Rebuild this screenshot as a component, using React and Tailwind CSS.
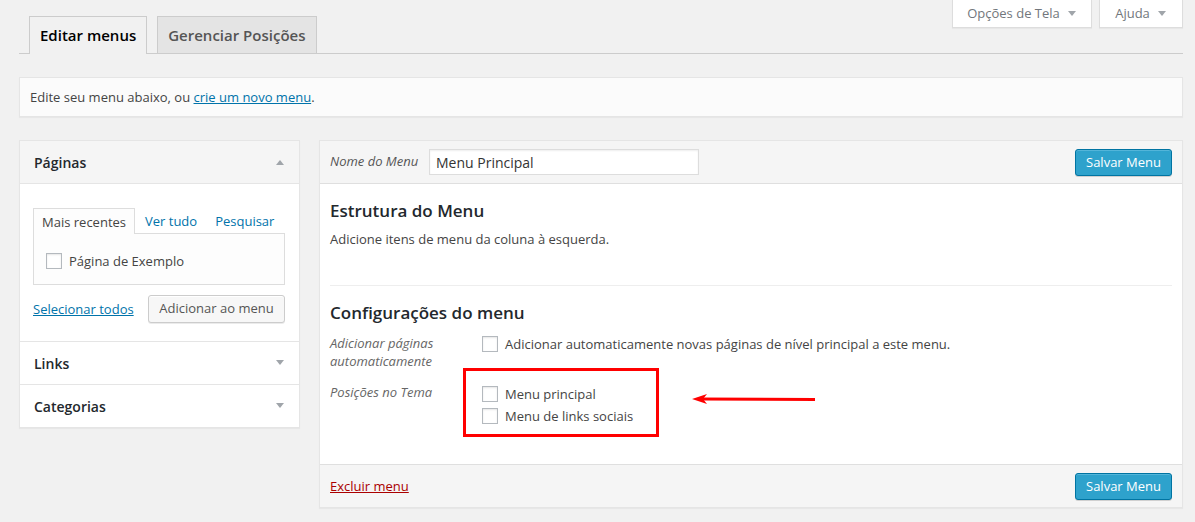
// Tela de edição de menus (painel admin)
import React from "react";

const font = { fontFamily: '"Open Sans", "Liberation Sans", sans-serif' };

function Checkbox() {
    return (
        <span className="inline-block w-4 h-4 shrink-0 bg-white border border-[#b4b9be] shadow-[inset_0_1px_2px_rgba(0,0,0,0.1)]" />
    );
}

function Caret({ up = false }) {
    return (
        <svg width="10" height="6" viewBox="0 0 10 6" className="shrink-0">
            {up ? (
                <path d="M1 6 L5 1 L9 6 Z" fill="#a0a5aa" />
            ) : (
                <path d="M1 0 L9 0 L5 5 Z" fill="#a0a5aa" />
            )}
        </svg>
    );
}

function SaveButton() {
    return (
        <button className="h-[27px] px-[10px] bg-[#2ea2cc] border border-[#0074a2] rounded-[3px] text-white text-[13px] leading-[25px] shadow-[inset_0_1px_0_rgba(120,200,230,0.5),0_1px_0_rgba(0,0,0,0.15)]">
            Salvar Menu
        </button>
    );
}

function SectionHeader({ title, open = false }) {
    return (
        <div
            className={`h-[43px] flex items-center justify-between pl-[14px] pr-[14px] ${
                open ? "bg-[#f5f5f5] border-b border-[#e5e5e5]" : "bg-white border-t border-[#e5e5e5]"
            }`}
        >
            <span className="text-[14px] font-semibold text-[#23282d]">{title}</span>
            <Caret up={open} />
        </div>
    );
}

export default function App() {
    return (
        <div className="min-h-[522px] bg-[#f1f1f1] text-[#444] text-[13px] pl-[19px] pr-[12px]" style={font}>
            {/* abas + opções de tela */}
            <div className="flex justify-between border-b border-[#ccc] h-[54px]">
                <div className="flex items-end gap-[10px] pl-[10px]">
                    <div className="h-[38px] px-[10px] flex items-center bg-[#f1f1f1] border border-b-0 border-[#ccc] -mb-px text-[15px] font-semibold text-black">
                        Editar menus
                    </div>
                    <div className="h-[37px] px-[10px] flex items-center bg-[#e4e4e4] border border-b-0 border-[#ccc] text-[15px] font-semibold text-[#555]">
                        Gerenciar Posições
                    </div>
                </div>
                <div className="flex items-start gap-[7px]">
                    <div className="h-[28px] w-[140px] flex items-center justify-center gap-[7px] bg-white border border-t-0 border-[#ddd] text-[13px] text-[#72777c] shadow-[0_1px_1px_rgba(0,0,0,0.04)]">
                        Opções de Tela <Caret />
                    </div>
                    <div className="h-[28px] w-[84px] flex items-center justify-center gap-[7px] bg-white border border-t-0 border-[#ddd] text-[13px] text-[#72777c] shadow-[0_1px_1px_rgba(0,0,0,0.04)]">
                        Ajuda <Caret />
                    </div>
                </div>
            </div>

            {/* aviso */}
            <div className="mt-[23px] h-[40px] flex items-center px-[10px] bg-[#fbfbfb] border border-[#e5e5e5] shadow-[0_1px_1px_rgba(0,0,0,0.04)] leading-[18px]">
                Edite seu menu abaixo, ou&nbsp;
                <a className="text-[#0073aa] underline">crie um novo menu</a>.
            </div>

            <div className="mt-[23px] flex items-start gap-[19px]">
                {/* coluna esquerda */}
                <div className="w-[281px] shrink-0 bg-white border border-[#e5e5e5] shadow-[0_1px_1px_rgba(0,0,0,0.04)]">
                    <SectionHeader title="Páginas" open />
                    <div className="pt-[24px] pb-[18px] pl-[13px] pr-[14px]">
                        <div className="flex items-end h-[25px] leading-[18px]">
                            <div className="h-[26px] -mb-px px-[8px] flex items-center border border-b-0 border-[#ddd] bg-[#fdfdfd] text-[#444] relative z-10">
                                Mais recentes
                            </div>
                            <span className="ml-[10px] h-[25px] flex items-center text-[#0073aa]">Ver tudo</span>
                            <span className="ml-[18px] h-[25px] flex items-center text-[#0073aa]">Pesquisar</span>
                        </div>
                        <div className="h-[52px] bg-[#fdfdfd] border border-[#ddd] pl-[12px] pt-[18px]">
                            <div className="flex items-center gap-[7px] leading-[18px]">
                                <Checkbox />
                                Página de Exemplo
                            </div>
                        </div>
                        <div className="mt-[10px] flex items-center justify-between">
                            <a className="text-[#0073aa] underline leading-[18px]">Selecionar todos</a>
                            <button className="h-[28px] w-[137px] bg-[#f7f7f7] border border-[#ccc] rounded-[3px] text-[#555] text-[13px] shadow-[inset_0_1px_0_#fff,0_1px_0_rgba(0,0,0,0.08)]">
                                Adicionar ao menu
                            </button>
                        </div>
                    </div>
                    <SectionHeader title="Links" />
                    <SectionHeader title="Categorias" />
                </div>

                {/* coluna direita */}
                <div className="flex-1 bg-white border border-[#e5e5e5] shadow-[0_1px_1px_rgba(0,0,0,0.04)]">
                    <div className="h-[43px] flex items-center justify-between pl-[10px] pr-[10px] bg-[#f5f5f5] border-b border-[#dfdfdf]">
                        <div className="flex items-center">
                            <span className="italic text-[#555] w-[99px]">Nome do Menu</span>
                            <div className="w-[270px] h-[26px] bg-white border border-[#ddd] shadow-[inset_0_1px_2px_rgba(0,0,0,0.07)] flex items-center pl-[6px] text-[14px] text-[#333]">
                                Menu Principal
                            </div>
                        </div>
                        <SaveButton />
                    </div>

                    <div className="px-[10px] pt-[15px] pb-[37px]">
                        <h3 className="text-[17px] font-semibold leading-[23px] text-[#23282d]">Estrutura do Menu</h3>
                        <p className="mt-[8px] leading-[18px]">Adicione itens de menu da coluna à esquerda.</p>
                        <div className="mt-[37px] border-t border-[#eee]" />
                        <h3 className="mt-[15px] text-[17px] font-semibold leading-[23px] text-[#23282d]">Configurações do menu</h3>

                        <div className="mt-[10px] flex items-start leading-[18px]">
                            <span className="w-[152px] italic text-[#666]">
                                Adicionar páginas
                                <br />
                                automaticamente
                            </span>
                            <div className="flex items-center gap-[7px] mt-[1px]">
                                <Checkbox />
                                Adicionar automaticamente novas páginas de nível principal a este menu.
                            </div>
                        </div>

                        <div className="relative mt-[13px] flex items-start leading-[18px]">
                            <span className="w-[152px] italic text-[#666]">Posições no Tema</span>
                            <div className="flex flex-col">
                                <div className="h-[22px] flex items-center gap-[7px]">
                                    <Checkbox />
                                    Menu principal
                                </div>
                                <div className="h-[22px] flex items-center gap-[7px]">
                                    <Checkbox />
                                    Menu de links sociais
                                </div>
                            </div>
                            {/* destaque em vermelho */}
                            <div className="absolute left-[133px] top-[-15px] w-[196px] h-[69px] border-[3px] border-[#ff0000]" />
                            <svg className="absolute left-[361px] top-[9px]" width="126" height="14" viewBox="0 0 126 14">
                                <line x1="10" y1="7" x2="124" y2="7.5" stroke="#ff0000" strokeWidth="3" />
                                <path d="M1 7 L16 2 L12 7 L16 12 Z" fill="#ff0000" />
                            </svg>
                        </div>
                    </div>

                    <div className="h-[43px] flex items-center justify-between px-[10px] bg-[#f5f5f5] border-t border-[#dfdfdf]">
                        <a className="text-[#a00] underline leading-[18px]">Excluir menu</a>
                        <SaveButton />
                    </div>
                </div>
            </div>
        </div>
    );
}
